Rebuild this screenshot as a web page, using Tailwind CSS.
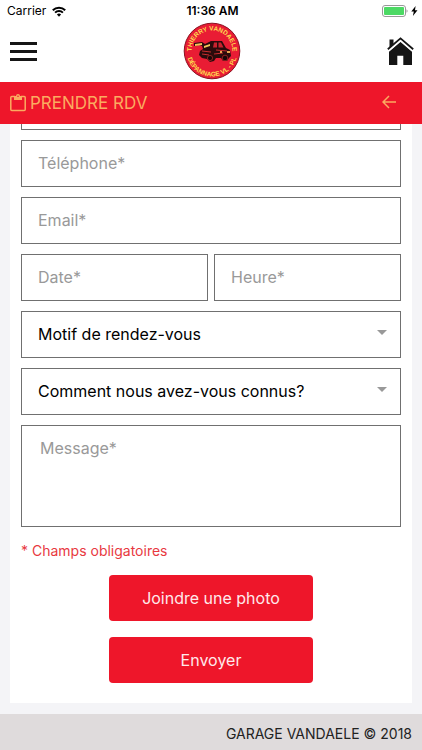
<!DOCTYPE html>
<html lang="fr">
<head>
  <meta charset="UTF-8">
  <title>Garage Vandaele - Prendre RDV</title>
  <meta name="viewport" content="width=device-width, initial-scale=1.0">
  <script src="https://cdn.jsdelivr.net/npm/@tailwindcss/browser@4"></script>
</head>
<body class="flex h-screen flex-col overflow-hidden bg-[#f4f4f7] font-['Inter','Liberation_Sans',sans-serif] text-black">

  <!-- Status bar -->
  <div class="grid h-[22px] shrink-0 grid-cols-3 items-center bg-white pl-[7px] pr-1 text-[12px] leading-4">
    <div class="flex items-center gap-1.5">
      <span>Carrier</span>
      <svg class="h-[11px] w-[14px]" viewBox="0 0 14 11" fill="none" stroke="#000" stroke-width="2">
        <path d="M0.8 4.2a8.8 8.8 0 0 1 12.4 0M3.1 6.6a5.5 5.5 0 0 1 7.8 0"/>
        <path d="M4.9 8.5a3 3 0 0 1 4.2 0L7 10.7z" fill="#000" stroke="none"/>
      </svg>
    </div>
    <span class="text-center font-semibold">11:36 AM</span>
    <div class="flex items-center justify-end gap-[3px]">
      <svg class="h-3 w-[26px]" viewBox="0 0 26 12">
        <rect x="0.5" y="0.5" width="23" height="11" rx="2.5" fill="#fff" stroke="#999"/>
        <rect x="2" y="2" width="20" height="8" rx="1" fill="#4cd964"/>
        <path d="M24.5 4.3c1.4.6 1.4 2.8 0 3.4z" fill="#999"/>
      </svg>
      <svg class="h-[10px] w-[7px]" viewBox="0 0 7 10"><path d="M4.6 0L0.3 5.6h2.5L1.9 10l4.6-5.8H4z"/></svg>
    </div>
  </div>

  <!-- Header -->
  <header class="flex h-[60px] shrink-0 items-center justify-between bg-white pb-[2px] pl-[10px] pr-2">
    <button type="button" aria-label="Menu" class="flex w-[27px] flex-col gap-[5px]">
      <span class="h-[3px] bg-[#151515]"></span>
      <span class="h-[3px] bg-[#151515]"></span>
      <span class="h-[3px] bg-[#151515]"></span>
    </button>
    <svg class="size-[58px]" viewBox="0 0 58 58" role="img" aria-label="Thierry Vandaele">
      <circle cx="29" cy="29" r="27.8" fill="#e91c34" stroke="#8a1220" stroke-width="1"/>
      <defs>
        <path id="arcTop" d="M10 36.7A20.5 20.5 0 1 1 48 36.7"/>
        <path id="arcBottom" d="M3.5 29a25.5 25.5 0 0 0 51 0"/>
      </defs>
      <g fill="#ffdc50" font-family="Liberation Sans, sans-serif" font-size="6.5" font-weight="700" text-anchor="middle">
        <text><textPath href="#arcTop" startOffset="50%">THIERRY VANDAELE</textPath></text>
        <text><textPath href="#arcBottom" startOffset="50%">DÉPANNAGE VL - PL</textPath></text>
      </g>
      <!-- tow truck -->
      <path d="M11 21l8-1 3 2 6-3h11l4 7 4 2 1 6-2 2-2 3h-4l-2-3h-5l-2 3-4 1-3-3-5-1-3-3 1-4 3-2-1-3-3-1-5 1z" fill="#2a0b0c"/>
      <path d="M31 20.5h3v5h-4zM35.5 20.5H38l2.5 5h-5z" fill="#c9222f"/>
      <path d="M12 22l7-1v2l-7 1zM21 24l6-2v2l-6 2z" fill="#f0c65a"/>
      <path d="M19 29l9 1M33 28l11 1M19 32l7 1M31 32l9-1" stroke="#c72d2e" stroke-width="1"/>
      <circle cx="27" cy="36" r="2.6" fill="#180607" stroke="#b92b2a" stroke-width=".7"/>
      <circle cx="42" cy="36" r="2.8" fill="#180607" stroke="#b92b2a" stroke-width=".7"/>
      <path d="M44 29h3v2h-3zM37 29h2v2h-2z" fill="#e8a24e"/>
    </svg>
    <a href="#" aria-label="Accueil">
      <svg class="h-[28px] w-[27px]" viewBox="0 0 27 28" fill="#151515">
        <path d="M13.5 4.2L25 14.5V28H16.3V18.8H10.3V28H2V14.5z"/>
        <path d="M0.8 12.8L13.5 2L26.2 12.8" fill="none" stroke="#fff" stroke-width="4.4"/>
        <path d="M2.5 2.5H6.5V7L2.5 10.5z"/>
        <path d="M0.8 12.2L13.5 1.4L26.2 12.2" fill="none" stroke="#151515" stroke-width="1.8"/>
      </svg>
    </a>
  </header>

  <!-- Title bar -->
  <div class="flex h-[42px] shrink-0 items-center justify-between bg-[#ee162a] pl-[10px] pr-[26px] text-[#fbab60]">
    <h1 class="flex items-center gap-1 text-[17px] leading-6">
      <svg class="h-[18px] w-4" viewBox="0 0 16 18" fill="none" stroke="currentColor" stroke-width="1.5">
        <path d="M5 2.5H1.8a1 1 0 0 0-1 1V15.5a1 1 0 0 0 1 1H14.2a1 1 0 0 0 1-1V3.5a1 1 0 0 0-1-1H11"/>
        <path d="M4 2H6A2 2 0 0 1 10 2H12V6H4z" fill="currentColor" stroke="none"/>
        <circle cx="8" cy="2.3" r=".8" fill="#ee162a" stroke="none"/>
      </svg>
      PRENDRE RDV
    </h1>
    <a href="#" aria-label="Retour" class="pb-[3px]">
      <svg class="block h-[14px] w-[14px]" viewBox="0 0 14 14" fill="none" stroke="currentColor" stroke-width="1.5">
        <path d="M14 7H1.2M7 1L1 7L7 13"/>
      </svg>
    </a>
  </div>

  <!-- Form, scrolled to its end -->
  <main class="flex min-h-0 flex-1 flex-col justify-end overflow-hidden px-[10px] pb-[11px]">
    <form class="flex shrink-0 flex-col gap-[10px] bg-white px-[11px] pb-5 text-[16px] leading-6">
      <input type="text" aria-label="Nom" class="h-[47px] w-full border border-[#707070] px-4 pb-[2px]">
      <input type="tel" aria-label="Téléphone" placeholder="Téléphone*" class="h-[47px] w-full border border-[#707070] px-4 pb-[2px] placeholder:text-[#999]">
      <input type="email" aria-label="Email" placeholder="Email*" class="h-[47px] w-full border border-[#707070] px-4 pb-[2px] placeholder:text-[#999]">
      <div class="grid grid-cols-2 gap-1.5">
        <input type="text" aria-label="Date" placeholder="Date*" class="h-[47px] w-full border border-[#707070] px-4 pb-[2px] placeholder:text-[#999]">
        <input type="text" aria-label="Heure" placeholder="Heure*" class="h-[47px] w-full border border-[#707070] px-4 pb-[2px] placeholder:text-[#999]">
      </div>
      <div class="relative">
        <select aria-label="Motif de rendez-vous" class="block h-[47px] w-full appearance-none border border-[#707070] px-4 pb-[2px]">
          <option>Motif de rendez-vous</option>
        </select>
        <svg class="pointer-events-none absolute right-[14px] top-[19px] h-[5px] w-[10px]" viewBox="0 0 10 5" fill="#999"><path d="M0 0h10L5 5z"/></svg>
      </div>
      <div class="relative">
        <select aria-label="Comment nous avez-vous connus?" class="block h-[47px] w-full appearance-none border border-[#707070] px-4 pb-[2px]">
          <option>Comment nous avez-vous connus?</option>
        </select>
        <svg class="pointer-events-none absolute right-[14px] top-[19px] h-[5px] w-[10px]" viewBox="0 0 10 5" fill="#999"><path d="M0 0h10L5 5z"/></svg>
      </div>
      <textarea aria-label="Message" placeholder="Message*" class="block h-[102px] w-full resize-none border border-[#707070] px-[18px] py-[10px] placeholder:text-[#999]"></textarea>
      <p class="pt-1 text-[14px] leading-5 text-[#e8393f]">* Champs obligatoires</p>
      <div class="flex flex-col items-center gap-4 pt-1 text-[16px] text-[#ffe9ea]">
        <button type="button" class="h-[46px] w-[204px] rounded bg-[#ee162a]">Joindre une photo</button>
        <button type="submit" class="h-[46px] w-[204px] rounded bg-[#ee162a]">Envoyer</button>
      </div>
    </form>
  </main>

  <!-- Footer -->
  <footer class="flex h-9 shrink-0 items-center justify-end bg-[#dfdbdc] px-[10px] pt-1 text-[14px] leading-5 text-[#222]">
    GARAGE VANDAELE © 2018
  </footer>

</body>
</html>
